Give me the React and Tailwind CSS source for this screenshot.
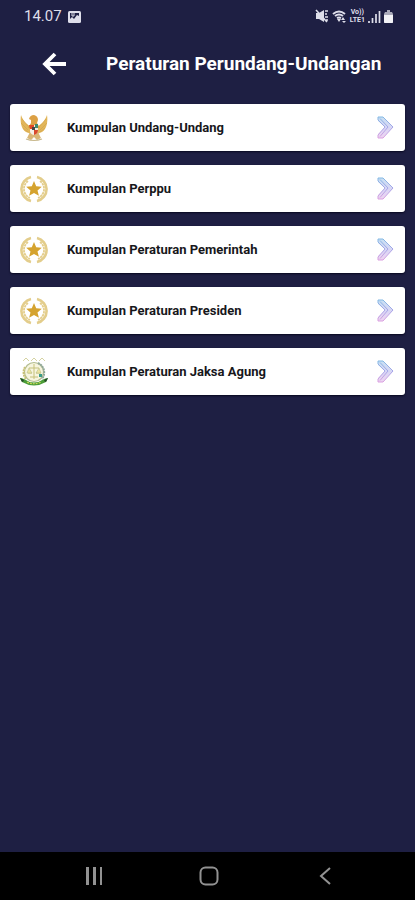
import React from "react";

function Garuda() {
  return (
    <svg viewBox="0 0 28 28" className="size-7" aria-hidden="true">
      <g fill="#e2b65a">
        <path d="M12 13C8 12 3 7 1 1C0 7 1 15 6 18L11 20Z" />
        <path d="M16 13C20 12 25 7 27 1C28 7 27 15 22 18L17 20Z" />
        <path d="M10 18L7 24L11 26L14 23L17 26L21 24L18 18Z" fill="#d9b675" />
        <path d="M9 5Q10 1 14 1Q18 2 18 6L17 9L20 14H8L11 9L11 6Z" fill="#dca044" />
      </g>
      <g fill="none" stroke="#cc9e48" strokeWidth=".5">
        <path d="M2 5L9 13M1 9L8 16M3 14L8 18M26 5L19 13M27 9L20 16M25 14L20 18" />
        <path d="M6 25Q14 28 22 25" stroke="#c9b98e" strokeWidth="1.2" />
      </g>
      <path d="M10 11H18V17Q17 20 14 21Q10 20 10 17Z" fill="#f4efe6" />
      <path d="M9 11H14V15H10Z" fill="#df4826" />
      <path d="M14 16H18Q18 20 14 21Z" fill="#d84a2d" />
      <path d="M15 10H18V14H15Z" fill="#3f8a70" />
      <path d="M12 13H15V16H12Z" fill="#484545" />
    </svg>
  );
}

function Wreath() {
  return (
    <svg viewBox="0 0 28 28" className="size-7" aria-hidden="true">
      <g fill="none" stroke="#e3cd8b">
        <path d="M11 2A12.300 12.300 0 0 0 11 26M17 2A12.300 12.300 0 0 1 17 26" strokeWidth="2.600" />
        <path d="M8 6A9.800 9.800 0 0 0 10 23M20 6A9.800 9.800 0 0 1 18 23" strokeWidth="1.800" strokeDasharray="2.500 .6" />
      </g>
      <path d="M14 6L16.200 11.300L21.800 11.700L17.500 15.400L18.900 20.800L14 17.900L9.100 20.800L10.500 15.400L6.200 11.700L11.800 11.300Z" fill="#d5a32f" />
    </svg>
  );
}

function Kejaksaan() {
  return (
    <svg viewBox="0 0 28 30" className="h-[30px] w-7" aria-hidden="true">
      <g fill="none" stroke="#d5d3a2">
        <path d="M3 4L6 1L9 4M11 4L14 1L17 4M19 4L22 1L25 4" />
      </g>
      <circle cx="14" cy="15" r="9.500" fill="#f7f5df" stroke="#b4bd91" strokeWidth="1.200" />
      <path d="M5 10A10.500 10.500 0 0 0 6 22" fill="none" stroke="#c9c276" strokeWidth="2" strokeDasharray="2 .6" />
      <path d="M18 6A10.500 10.500 0 0 1 22 22" fill="none" stroke="#91a899" strokeWidth="2" strokeDasharray="2 .6" />
      <path d="M14 7V22M9 11H19M8 16H12M16 16H21M10 20H18" fill="none" stroke="#c5c17b" />
      <path d="M9 11L7 16H12ZM19 11L16 16H21Z" fill="#eee6a1" stroke="#b9bf8a" strokeWidth=".6" />
      <path d="M19 17H22V20H19Z" fill="#399b87" />
      <path d="M0 21L4 22Q14 29 24 22L28 21L26 25Q14 32 2 25Z" fill="#4b9d3a" />
      <path d="M7 25Q14 28.500 21 25" fill="none" stroke="#cfd758" strokeWidth="1.200" strokeDasharray="2 1" />
      <path d="M0 21L3 22L4 24L2 25Z" fill="#244e27" />
      <path d="M28 21L25 22L24 24L26 25Z" fill="#244e27" />
    </svg>
  );
}

function Chevron() {
  return (
    <svg viewBox="0 0 18 23" className="h-[23px] w-[18px]" aria-hidden="true">
      <defs>
        <linearGradient id="arrow" x1="0" y1="0" x2="0" y2="1">
          <stop stopColor="#83b9e4" />
          <stop offset=".5" stopColor="#a7a5e8" />
          <stop offset="1" stopColor="#dba0e0" />
        </linearGradient>
      </defs>
      <path d="M1 1H6L16 11L6 22H1V18L8 11L1 5Z" fill="url(#arrow)" fillOpacity=".45" />
      <path d="M1 1H6L16 11L6 22H1V19L8 11L1 4ZM3 2.500L11 11L3 20.500" fill="none" stroke="url(#arrow)" strokeWidth="1" />
    </svg>
  );
}

const items = [
  ["Kumpulan Undang-Undang", Garuda],
  ["Kumpulan Perppu", Wreath],
  ["Kumpulan Peraturan Pemerintah", Wreath],
  ["Kumpulan Peraturan Presiden", Wreath],
  ["Kumpulan Peraturan Jaksa Agung", Kejaksaan],
];

function StatusBar() {
  return (
    <div className="flex h-8 items-center justify-between pr-[22px] pl-6 text-[#dedeea]">
      <div className="flex items-center gap-1.5">
        <span className="text-[15px] leading-5">14.07</span>
        <svg viewBox="0 0 13 13" className="size-[13px]" aria-hidden="true">
          <rect y="1" width="13" height="12" rx="1.500" fill="currentColor" />
          <path d="M2 3H11V6L9 5L6 9L4 7L2 9Z" fill="#1f2044" />
          <path d="M4 3V6H6V3" fill="none" stroke="currentColor" />
        </svg>
      </div>
      <div className="flex items-center gap-[3px]">
        <svg viewBox="0 0 14 14" className="size-3.5" aria-hidden="true">
          <path d="M1 4H4L9 1V13L4 10H1Z" fill="currentColor" />
          <path d="M1 1L12 13M10 2H13M10 5H12M10 8H13M11 11H13" stroke="currentColor" strokeWidth="1.600" />
        </svg>
        <svg viewBox="0 0 15 14" className="h-3.5 w-[15px]" aria-hidden="true">
          <path d="M1 5Q7 0 13 5M3 7Q7 4 11 7M5 9Q7 8 9 9" fill="none" stroke="currentColor" strokeWidth="2" />
          <path d="M5 10L7 13L9 10ZM11 8L13 11H9ZM10 12H14L12 14Z" fill="currentColor" />
        </svg>
        <span className="flex flex-col items-center text-[7px] leading-[8px] font-bold">
          <span>Vo))</span>
          <span>LTE1</span>
        </span>
        <svg viewBox="0 0 13 13" className="size-[13px]" aria-hidden="true">
          <path d="M1 11V13M4.500 8V13M8 4V13M11.500 1V13" stroke="currentColor" strokeWidth="1.700" />
        </svg>
        <svg viewBox="0 0 9 13" className="h-[13px] w-[9px]" aria-hidden="true">
          <path d="M3 0H6V2H8L9 4V12Q9 13 8 13H1Q0 13 0 12V4L1 2H3Z" fill="#aaaaba" />
          <path d="M0 5H9V12Q9 13 8 13H1Q0 13 0 12Z" fill="#f2f2f6" />
        </svg>
      </div>
    </div>
  );
}

export default function App() {
  return (
    <div className="flex min-h-screen flex-col bg-[#1e1f43] font-[Roboto,sans-serif]">
      <StatusBar />
      <header className="flex h-16 items-center gap-10 pl-[42px] text-white">
        <button type="button" aria-label="Kembali" className="flex h-8 w-6 items-center">
          <svg viewBox="0 0 24 24" className="size-6" fill="none" stroke="currentColor" strokeWidth="3.800" aria-hidden="true">
            <path d="M24 12H3M13 2L3 12L13 22" />
          </svg>
        </button>
        <h1 className="text-[19px] leading-7 font-bold whitespace-nowrap">Peraturan Perundang-Undangan</h1>
      </header>
      <main className="flex flex-1 flex-col gap-3.5 px-2.5 pt-2">
        {items.map(([label, Icon]) => (
          <button
            key={label}
            type="button"
            className="flex h-[47px] w-full items-center rounded-[3px] bg-white px-2.5 text-left text-[#17171b] shadow-[0_1px_2px_#080820]"
          >
            <span className="flex w-[47px] items-center"><Icon /></span>
            <span className="flex-1 text-[13px] leading-5 font-bold">{label}</span>
            <Chevron />
          </button>
        ))}
      </main>
      <nav className="flex h-12 items-center justify-around bg-black pr-8 pl-9 text-[#929292]">
        <button type="button" aria-label="Aplikasi terbaru" className="flex size-8 items-center justify-center">
          <svg viewBox="0 0 18 18" className="size-[18px]" fill="none" stroke="currentColor" strokeWidth="3" aria-hidden="true"><path d="M2.500 0V18M9.500 0V18" /><path d="M16 0V18" strokeWidth="2" /></svg>
        </button>
        <button type="button" aria-label="Beranda" className="flex size-8 items-center justify-center">
          <svg viewBox="0 0 20 20" className="size-5" fill="none" stroke="currentColor" strokeWidth="2" aria-hidden="true"><rect x="1.500" y="1.500" width="17" height="17" rx="5" /></svg>
        </button>
        <button type="button" aria-label="Kembali ke layar sebelumnya" className="flex size-8 items-center justify-center">
          <svg viewBox="0 0 18 18" className="size-[18px]" fill="none" stroke="currentColor" strokeWidth="2" aria-hidden="true"><path d="M14 1L5 9L14 17" /></svg>
        </button>
      </nav>
    </div>
  );
}
